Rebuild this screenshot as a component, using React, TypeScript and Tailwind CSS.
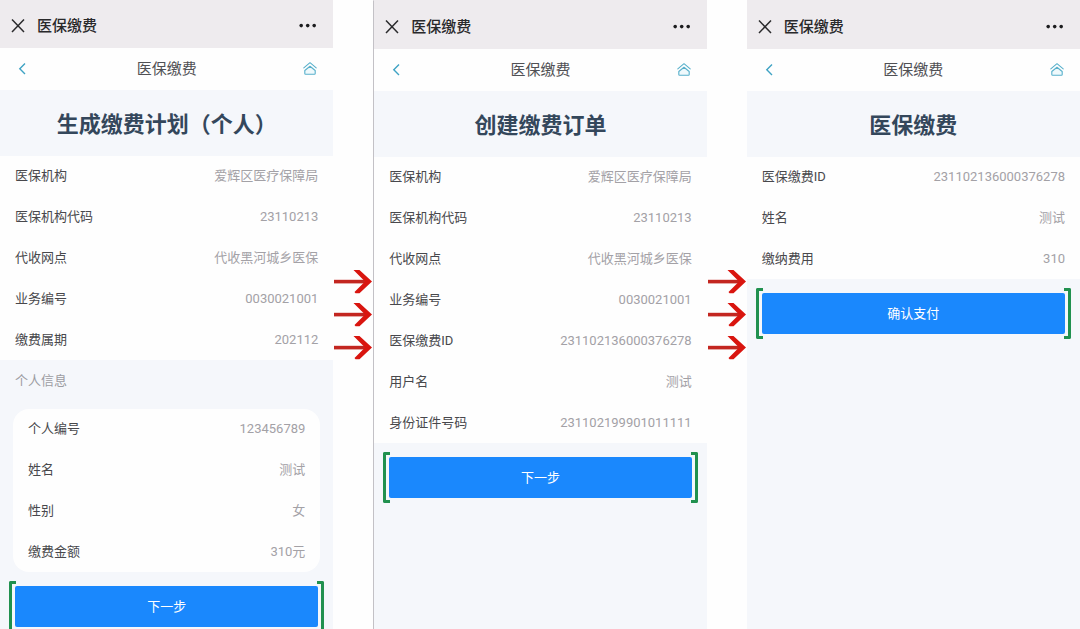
import { clsx } from 'clsx';

interface Field {
  label: string;
  value: string;
}

interface Step {
  title: string;
  fields: Field[];
  person?: Field[];
  action: string;
}

const steps: Step[] = [
  {
    title: '生成缴费计划（个人）',
    fields: [
      { label: '医保机构', value: '爱辉区医疗保障局' },
      { label: '医保机构代码', value: '23110213' },
      { label: '代收网点', value: '代收黑河城乡医保' },
      { label: '业务编号', value: '0030021001' },
      { label: '缴费属期', value: '202112' },
    ],
    person: [
      { label: '个人编号', value: '123456789' },
      { label: '姓名', value: '测试' },
      { label: '性别', value: '女' },
      { label: '缴费金额', value: '310元' },
    ],
    action: '下一步',
  },
  {
    title: '创建缴费订单',
    fields: [
      { label: '医保机构', value: '爱辉区医疗保障局' },
      { label: '医保机构代码', value: '23110213' },
      { label: '代收网点', value: '代收黑河城乡医保' },
      { label: '业务编号', value: '0030021001' },
      { label: '医保缴费ID', value: '231102136000376278' },
      { label: '用户名', value: '测试' },
      { label: '身份证件号码', value: '231102199901011111' },
    ],
    action: '下一步',
  },
  {
    title: '医保缴费',
    fields: [
      { label: '医保缴费ID', value: '231102136000376278' },
      { label: '姓名', value: '测试' },
      { label: '缴纳费用', value: '310' },
    ],
    action: '确认支付',
  },
];

function CloseIcon() {
  return (
    <svg width="14" height="14" viewBox="0 0 14 14" fill="none" stroke="#2b2b2d" strokeWidth="1.5">
      <path d="M1 0.5l12 12.5M13 0.5L1 13" />
    </svg>
  );
}

function MoreIcon() {
  return (
    <svg width="18" height="6" viewBox="0 0 18 6" fill="#1c1c1e">
      <circle cx="2.2" cy="2.6" r="1.8" />
      <circle cx="8.7" cy="2.6" r="1.8" />
      <circle cx="15.2" cy="2.6" r="1.8" />
    </svg>
  );
}

function BackIcon() {
  return (
    <svg width="8" height="12" viewBox="0 0 8 12" fill="none" stroke="#3fa3c4" strokeWidth="1.4">
      <path d="M7 0.6L1.8 5.8 7 11" />
    </svg>
  );
}

function HomeIcon() {
  return (
    <svg
      width="14"
      height="14"
      viewBox="0 0 14 14"
      fill="none"
      stroke="#58b0cb"
      strokeWidth="1.1"
      strokeLinecap="round"
      strokeLinejoin="round"
    >
      <path d="M0.8 5.8L7 0.7l6.2 5.1" />
      <path d="M7 4.3L1.8 8.5v2.9q0 .8.8.8h8.8q.8 0 .8-.8V8.5z" fill="#eff9fc" />
    </svg>
  );
}

function ArrowIcon() {
  return (
    <svg width="38" height="24" viewBox="0 0 38 24">
      <path d="M0 9.8h31v3.6H0z" fill="#c32620" />
      <path d="M19.5 0h6L38 11.6 25.5 23.2h-4L20.5 22 31 11.6z" fill="#d9150f" />
    </svg>
  );
}

function Arrows() {
  return (
    <div className="flex flex-col items-center gap-[9px] pt-[270px]">
      <ArrowIcon />
      <ArrowIcon />
      <ArrowIcon />
    </div>
  );
}

function FieldList({ fields, className }: { fields: Field[]; className?: string }) {
  return (
    <dl className={clsx('flex flex-col gap-px bg-[#fefefe] px-[15px] text-[13px]', className)}>
      {fields.map((field) => (
        <div key={field.label} className="flex h-10 items-center justify-between">
          <dt className="text-[#48484c]">{field.label}</dt>
          <dd className="text-[#a3a1a6]">{field.value}</dd>
        </div>
      ))}
    </dl>
  );
}

function ActionButton({ label }: { label: string }) {
  return (
    <div className="relative mx-[15px] mt-3.5">
      <button type="button" className="h-[41px] w-full rounded-xs bg-[#1a88fd] text-[13px] text-white">
        {label}
      </button>
      {/* green brackets around the button */}
      <span className="pointer-events-none absolute -top-[5px] -bottom-[5px] -left-1.5 w-[7px] rounded-l-xs border-3 border-r-0 border-[#21914f]" />
      <span className="pointer-events-none absolute -top-[5px] -right-1.5 -bottom-[5px] w-[7px] rounded-r-xs border-3 border-l-0 border-[#21914f]" />
    </div>
  );
}

function Screen({ step, className }: { step: Step; className?: string }) {
  return (
    <section className={clsx('overflow-hidden bg-[#f5f7fb]', className)}>
      <header className="flex h-12 items-center bg-[#eeebee] pt-1 pr-4 pl-[11px]">
        <button type="button" aria-label="关闭">
          <CloseIcon />
        </button>
        <span className="ml-3 text-[15px] font-medium text-[#29292b]">医保缴费</span>
        <button type="button" aria-label="更多" className="ml-auto">
          <MoreIcon />
        </button>
      </header>
      <nav className="flex h-[42px] items-center justify-between bg-[#fefefe] pr-4 pl-[18px]">
        <button type="button" aria-label="返回" className="w-3">
          <BackIcon />
        </button>
        <span className="text-[15px] text-[#505054]">医保缴费</span>
        <button type="button" aria-label="首页">
          <HomeIcon />
        </button>
      </nav>
      <h1 className="flex h-[66px] items-center justify-center pt-0.5 text-[22px] font-bold whitespace-nowrap text-[#34475b]">
        {step.title}
      </h1>
      <FieldList fields={step.fields} />
      {step.person && (
        <>
          <h2 className="mb-2 flex h-[41px] items-center px-[15px] text-[13px] text-[#9c9ca2]">个人信息</h2>
          <FieldList fields={step.person} className="mx-[13px] rounded-2xl" />
        </>
      )}
      <ActionButton label={step.action} />
    </section>
  );
}

export default function App() {
  return (
    <main className="grid min-h-screen grid-cols-[1fr_40px_1fr_40px_1fr] bg-[#fefefe] font-[Roboto,'Noto_Sans_CJK_SC',sans-serif]">
      <Screen step={steps[0]} />
      <Arrows />
      <Screen step={steps[1]} className="border-t border-l border-t-[#eeebee] border-l-[#c3c1c6]" />
      <Arrows />
      <Screen step={steps[2]} className="border-t border-t-[#eeebee]" />
    </main>
  );
}
